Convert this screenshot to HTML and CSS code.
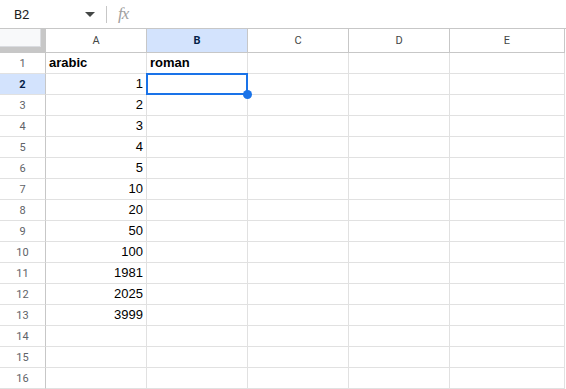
FILE: index.html
```html
<!DOCTYPE html>
<html lang="en">
<head>
    <meta charset="UTF-8">
    <meta name="viewport" content="width=device-width, initial-scale=1.0">
    <title>Sheet</title>
<link rel="stylesheet" href="styles.css">
</head>
<body>
    <div class="formula-bar">
        <div class="name-box">B2</div>
        <svg class="caret" width="10" height="5" viewBox="0 0 10 5"><path d="M0 0h10L5 5z" fill="#444746"/></svg>
        <div class="divider"></div>
        <div class="fx">fx</div>
    </div>

    <div class="sheet">
        <div class="corner"></div>
        <div class="col-head">A</div>
        <div class="col-head active">B</div>
        <div class="col-head">C</div>
        <div class="col-head">D</div>
        <div class="col-head">E</div>

        <div class="row-head">1</div>
        <div class="cell bold">arabic</div>
        <div class="cell bold">roman</div>
        <div class="cell"></div><div class="cell"></div><div class="cell"></div>

        <div class="row-head active">2</div>
        <div class="cell num">1</div>
        <div class="cell selected"><span class="sel-box"></span><span class="handle"></span></div>
        <div class="cell"></div><div class="cell"></div><div class="cell"></div>

        <div class="row-head">3</div>
        <div class="cell num">2</div>
        <div class="cell"></div><div class="cell"></div><div class="cell"></div><div class="cell"></div>

        <div class="row-head">4</div>
        <div class="cell num">3</div>
        <div class="cell"></div><div class="cell"></div><div class="cell"></div><div class="cell"></div>

        <div class="row-head">5</div>
        <div class="cell num">4</div>
        <div class="cell"></div><div class="cell"></div><div class="cell"></div><div class="cell"></div>

        <div class="row-head">6</div>
        <div class="cell num">5</div>
        <div class="cell"></div><div class="cell"></div><div class="cell"></div><div class="cell"></div>

        <div class="row-head">7</div>
        <div class="cell num">10</div>
        <div class="cell"></div><div class="cell"></div><div class="cell"></div><div class="cell"></div>

        <div class="row-head">8</div>
        <div class="cell num">20</div>
        <div class="cell"></div><div class="cell"></div><div class="cell"></div><div class="cell"></div>

        <div class="row-head">9</div>
        <div class="cell num">50</div>
        <div class="cell"></div><div class="cell"></div><div class="cell"></div><div class="cell"></div>

        <div class="row-head">10</div>
        <div class="cell num">100</div>
        <div class="cell"></div><div class="cell"></div><div class="cell"></div><div class="cell"></div>

        <div class="row-head">11</div>
        <div class="cell num">1981</div>
        <div class="cell"></div><div class="cell"></div><div class="cell"></div><div class="cell"></div>

        <div class="row-head">12</div>
        <div class="cell num">2025</div>
        <div class="cell"></div><div class="cell"></div><div class="cell"></div><div class="cell"></div>

        <div class="row-head">13</div>
        <div class="cell num">3999</div>
        <div class="cell"></div><div class="cell"></div><div class="cell"></div><div class="cell"></div>

        <div class="row-head">14</div>
        <div class="cell"></div><div class="cell"></div><div class="cell"></div><div class="cell"></div><div class="cell"></div>

        <div class="row-head">15</div>
        <div class="cell"></div><div class="cell"></div><div class="cell"></div><div class="cell"></div><div class="cell"></div>

        <div class="row-head">16</div>
        <div class="cell"></div><div class="cell"></div><div class="cell"></div><div class="cell"></div><div class="cell"></div>
    </div>
</body>
</html>
```

FILE: styles.css
```css
*{
    margin: 0;
    padding: 0;
    box-sizing: border-box;
}
body{
    background: #fff;
    font-family: "Liberation Sans", Arial, sans-serif;
    color: #000;
    width: 566px;
    overflow: hidden;
}
.formula-bar{
    height: 29px;
    display: flex;
    align-items: center;
    border-bottom: 1px solid #c7c7c7;
}
.name-box{
    width: 85px;
    padding-left: 14px;
    font-family: Roboto, "Liberation Sans", sans-serif;
    font-size: 13px;
    color: #1f1f1f;
}
.caret{
    margin-right: 11px;
}
.divider{
    width: 1px;
    height: 17px;
    background: #c7c7c7;
}
.fx{
    margin-left: 11px;
    font-family: "Liberation Serif", serif;
    font-style: italic;
    font-size: 17px;
    color: #a0a0a0;
    letter-spacing: -1px;
}
.sheet{
    display: grid;
    grid-template-columns: 46px 101px 101px 101px 101px 115px;
    grid-template-rows: 24px;
    grid-auto-rows: 21px;
}
.corner{
    background: #f8f9fa;
    border-right: 5px solid #c7c7c7;
    border-bottom: 6px solid #c7c7c7;
    box-shadow: inset -1px -1px 0 #dadce0;
}
.col-head{
    display: flex;
    align-items: center;
    justify-content: center;
    border-right: 1px solid #c7c7c7;
    border-bottom: 1px solid #c7c7c7;
    font-family: Roboto, "Liberation Sans", sans-serif;
    font-size: 11px;
    color: #444746;
}
.row-head{
    display: flex;
    align-items: center;
    justify-content: center;
    border-right: 1px solid #c7c7c7;
    border-bottom: 1px solid #e1e1e1;
    font-family: Roboto, "Liberation Sans", sans-serif;
    font-size: 11px;
    color: #5f6368;
}
.col-head.active,
.row-head.active{
    background: #d3e3fd;
    color: #041e49;
    font-weight: 700;
}
.cell{
    position: relative;
    border-right: 1px solid #e1e1e1;
    border-bottom: 1px solid #e1e1e1;
    font-size: 13px;
    line-height: 20px;
    padding: 0 3px;
    white-space: nowrap;
}
.cell.bold{
    font-weight: 700;
}
.cell.num{
    text-align: right;
}
.cell.selected{
    z-index: 2;
}
.sel-box{
    position: absolute;
    top: -1px;
    left: -1px;
    right: -1px;
    bottom: -1px;
    border: 2px solid #1a73e8;
}
.handle{
    position: absolute;
    right: -5px;
    bottom: -5px;
    width: 9px;
    height: 9px;
    border-radius: 50%;
    background: #1a73e8;
}
```
